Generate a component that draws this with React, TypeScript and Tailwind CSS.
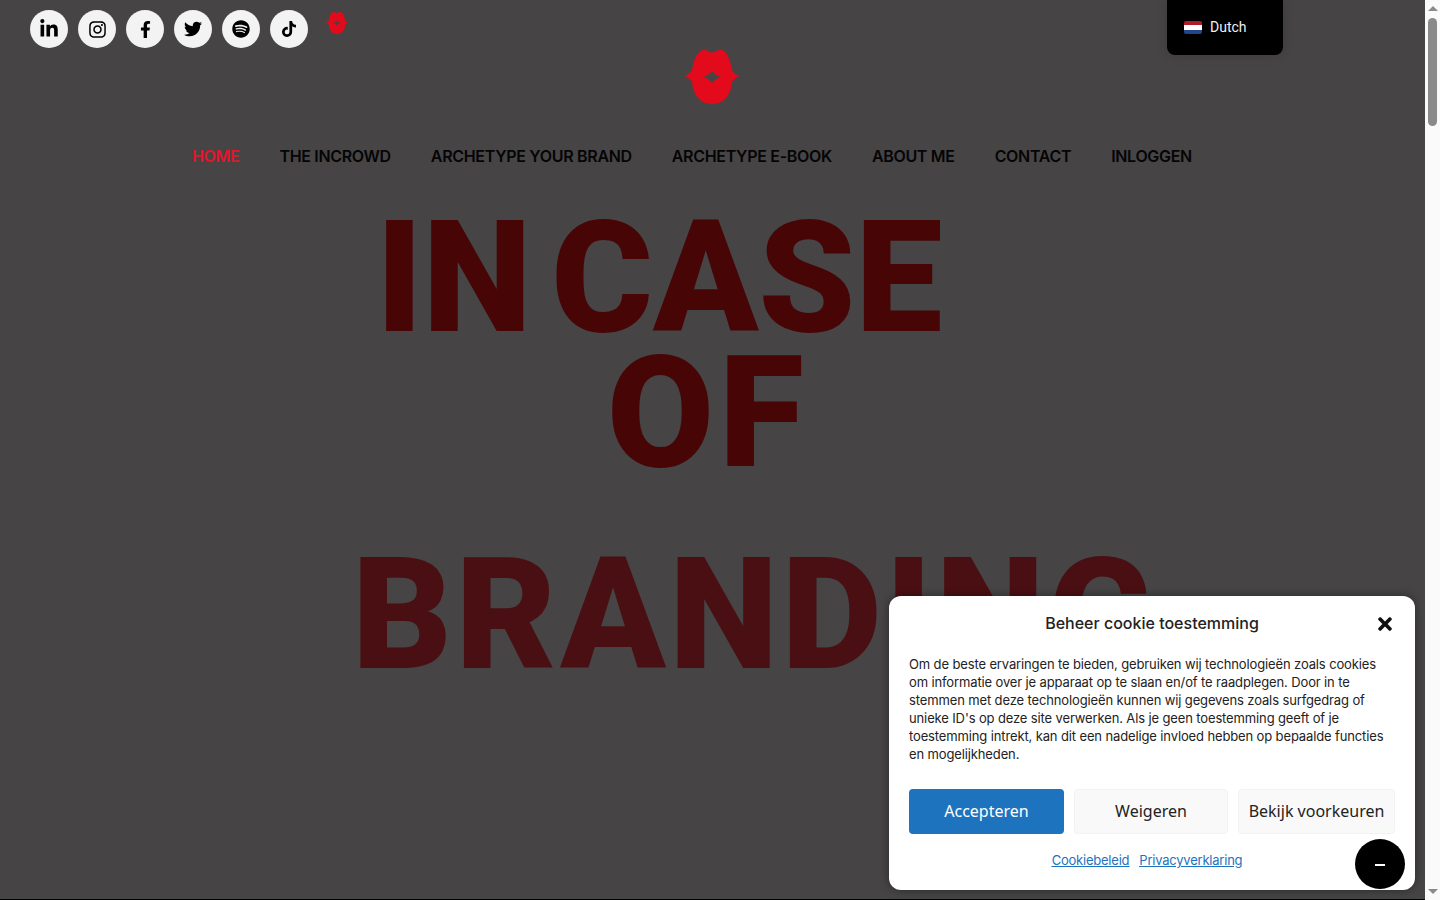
import { FaFacebookF, FaInstagram, FaLinkedinIn, FaSpotify, FaTiktok, FaTimes, FaTwitter } from "react-icons/fa";

const socials = [
  { Icon: FaLinkedinIn, size: "text-[20px]" },
  { Icon: FaInstagram, size: "text-[19px]" },
  { Icon: FaFacebookF, size: "text-[17px]" },
  { Icon: FaTwitter, size: "text-[18px]" },
  { Icon: FaSpotify, size: "text-[18px]" },
  { Icon: FaTiktok, size: "text-[16px]" },
];
const navItems = ["HOME", "THE INCROWD", "ARCHETYPE YOUR BRAND", "ARCHETYPE E-BOOK", "ABOUT ME", "CONTACT", "INLOGGEN"];

function Lips({ className }: { className: string }) {
  return (
    <svg viewBox="0 0 54 54" className={className}>
      <path
        fill="#e30a1b"
        fillRule="evenodd"
        d="M0 26C3 24.5 6 23 7 20C9 8 13 0 19 0C22 0 25 2 27 3C29 2 32 0 36 0C41 0 45 8 47 20C48 23 51 24.5 54 26C51 28 48 30 47 32C46 46 38 54 27 54C16 54 8 46 7 32C6 30 3 28 0 26ZM18 27C22 26 25 24 27 21C29 24 32 26 36 27C32 28 29 30 27 33C25 30 22 28 18 27Z"
      />
    </svg>
  );
}

export default function App() {
  return (
    <div className="relative flex h-[900px] w-full overflow-hidden bg-[#fafafa] font-['Inter',sans-serif]">
      {/* page, dimmed by the cookie overlay */}
      <div className="relative flex w-[1425px] shrink-0 flex-col border-b border-black bg-[#464445]">
        <div className="flex items-start gap-[10px] pl-[30px] pt-[10px]">
          {socials.map(({ Icon, size }, i) => (
            <a key={i} className={`flex h-[38px] w-[38px] items-center justify-center rounded-full bg-[#f4f3f4] text-black ${size}`}>
              <Icon />
            </a>
          ))}
          <Lips className="ml-2 mt-[2px] h-[22px] w-[22px]" />
        </div>

        <div className="flex justify-center pr-[1px] pt-[2px]">
          <Lips className="h-[54px] w-[54px]" />
        </div>

        <nav className="mt-[40px] flex gap-[40px] pl-[192px] text-[16px] font-semibold leading-6 tracking-[-0.32px] text-[#050505]">
          {navItems.map((item, i) => (
            <a key={item} className={i === 0 ? "text-[#e3152b]" : ""}>
              {item}
            </a>
          ))}
        </nav>

        <h1 className="mt-[43px] whitespace-nowrap font-['Roboto',sans-serif] text-[155px] font-black leading-[135px]">
          <div className="ml-[376px] text-[#470506] [word-spacing:-19px]">IN CASE</div>
          <div className="ml-[607px] tracking-[5px] text-[#470506]">OF</div>
          <div className="ml-[352px] mt-[67px] tracking-[3.5px] text-[#4a0f12]">BRANDING</div>
        </h1>

        <div className="absolute right-[142px] top-0 flex h-[55px] w-[116px] items-center gap-2 rounded-b-lg bg-black pl-[17px] font-['Roboto',sans-serif] text-[14px] text-[#f0f0f0] shadow-[0_0_12px_rgba(0,0,0,0.15)]">
          <span className="flex h-[13px] w-[18px] flex-col overflow-hidden rounded-[2px]">
            <span className="flex-1 bg-[#ae1c28]" />
            <span className="flex-1 bg-white" />
            <span className="flex-1 bg-[#21468b]" />
          </span>
          Dutch
        </div>
      </div>

      {/* scrollbar */}
      <div className="flex w-[15px] shrink-0 flex-col items-center">
        <div className="mt-[6px] h-0 w-0 border-x-[5px] border-b-[5px] border-x-transparent border-b-[#8a8a8a]" />
        <div className="mt-[7px] h-[108px] w-[9px] rounded-full bg-[#8a8a8a]" />
        <div className="mb-[6px] mt-auto h-0 w-0 border-x-[5px] border-t-[5px] border-x-transparent border-t-[#8a8a8a]" />
      </div>

      {/* cookie dialog */}
      <div className="absolute left-[889px] top-[596px] h-[294px] w-[526px] rounded-xl bg-white px-5 shadow-[0_0_10px_rgba(0,0,0,0.4)]">
        <div className="relative flex h-[55px] items-center justify-center pb-[2px] text-[16px] font-medium text-[#222]">
          Beheer cookie toestemming
          <FaTimes className="absolute right-0 top-[18px] h-[20px] w-[20px] text-[#111]" />
        </div>
        <p className="mt-1 whitespace-nowrap text-[13px] leading-[18px] tracking-[-0.13px] text-[#222]">
          Om de beste ervaringen te bieden, gebruiken wij technologieën zoals cookies
          <br />
          om informatie over je apparaat op te slaan en/of te raadplegen. Door in te
          <br />
          stemmen met deze technologieën kunnen wij gegevens zoals surfgedrag of
          <br />
          unieke ID's op deze site verwerken. Als je geen toestemming geeft of je
          <br />
          toestemming intrekt, kan dit een nadelige invloed hebben op bepaalde functies
          <br />
          en mogelijkheden.
        </p>
        <div className="mt-[26px] flex gap-[10px] font-['Noto_Sans',sans-serif] text-[16px]">
          <button className="h-[45px] w-[155px] rounded bg-[#1e73be] pb-[2px] text-white">Accepteren</button>
          <button className="h-[45px] w-[154px] rounded border border-[#f2f2f2] bg-[#f9f9f9] pb-[2px] text-[#222]">Weigeren</button>
          <button className="h-[45px] w-[157px] rounded border border-[#f2f2f2] bg-[#f9f9f9] pb-[2px] text-[#222]">Bekijk voorkeuren</button>
        </div>
        <div className="mt-[16px] flex justify-center gap-[10px] pr-[10px] text-[13px] leading-[20px] tracking-[-0.22px] text-[#1e73be] underline">
          <a>Cookiebeleid</a>
          <a>Privacyverklaring</a>
        </div>
      </div>

      {/* floating toggle */}
      <button className="absolute left-[1355px] top-[839px] flex h-[50px] w-[50px] items-center justify-center rounded-full bg-black">
        <span className="mt-[1px] h-[2px] w-[10px] bg-white" />
      </button>
    </div>
  );
}
